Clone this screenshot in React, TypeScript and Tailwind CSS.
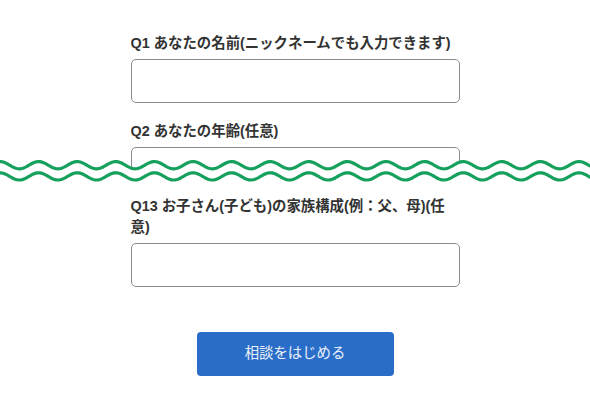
import React from "react";

const FONT = { fontFamily: '"Liberation Sans", "Noto Sans CJK JP", sans-serif' };

function wavePath(mid: number, amp: number, period: number, width: number) {
  const pts: string[] = [];
  for (let x = -2; x <= width + 2; x += 1) {
    const y = mid - amp * Math.cos((2 * Math.PI * x) / period);
    pts.push(`${x === -2 ? "M" : "L"}${x} ${y.toFixed(2)}`);
  }
  return pts.join(" ");
}

function Wave() {
  const W = 590;
  const H = 41;
  const P = 38.6;
  const upper = wavePath(10.2, 3.6, P, W);
  const lower = wavePath(21.4, 3.6, P, W);
  const fill = `${upper} L${W + 2} ${H} L-2 ${H} Z`;
  return (
    <svg
      width={W}
      height={H}
      viewBox={`0 0 ${W} ${H}`}
      className="relative z-10 block -mt-[15px]"
    >
      <path d={fill} fill="#ffffff" />
      <path d={upper} fill="none" stroke="#15a05c" strokeWidth={3.2} strokeLinecap="round" />
      <path d={lower} fill="none" stroke="#15a05c" strokeWidth={3.2} strokeLinecap="round" />
    </svg>
  );
}

function Field({ label, className = "" }: { label: React.ReactNode; className?: string }) {
  return (
    <div className={className}>
      <div className="text-[14.4px] leading-[21px] font-bold text-[#333333] mb-[5px]">{label}</div>
      <div className="h-[44px] w-full rounded-[5px] border border-[#8a8a8a] bg-white" />
    </div>
  );
}

export default function App() {
  return (
    <div className="w-[590px] h-[407px] bg-white overflow-hidden" style={FONT}>
      <div className="w-[329px] mx-auto h-[170px] overflow-hidden pt-[33px]">
        <Field label="Q1 あなたの名前(ニックネームでも入力できます)" />
        <Field label="Q2 あなたの年齢(任意)" className="mt-[18px]" />
      </div>
      <Wave />
      <div className="w-[329px] mx-auto">
        <Field label="Q13 お子さん(子ども)の家族構成(例：父、母)(任意)" />
        <div className="flex justify-center mt-[45px]">
          <button className="w-[197px] h-[44px] rounded-[4px] bg-[#2a6dc8] text-[14.4px] text-white/90">
            相談をはじめる
          </button>
        </div>
      </div>
    </div>
  );
}
